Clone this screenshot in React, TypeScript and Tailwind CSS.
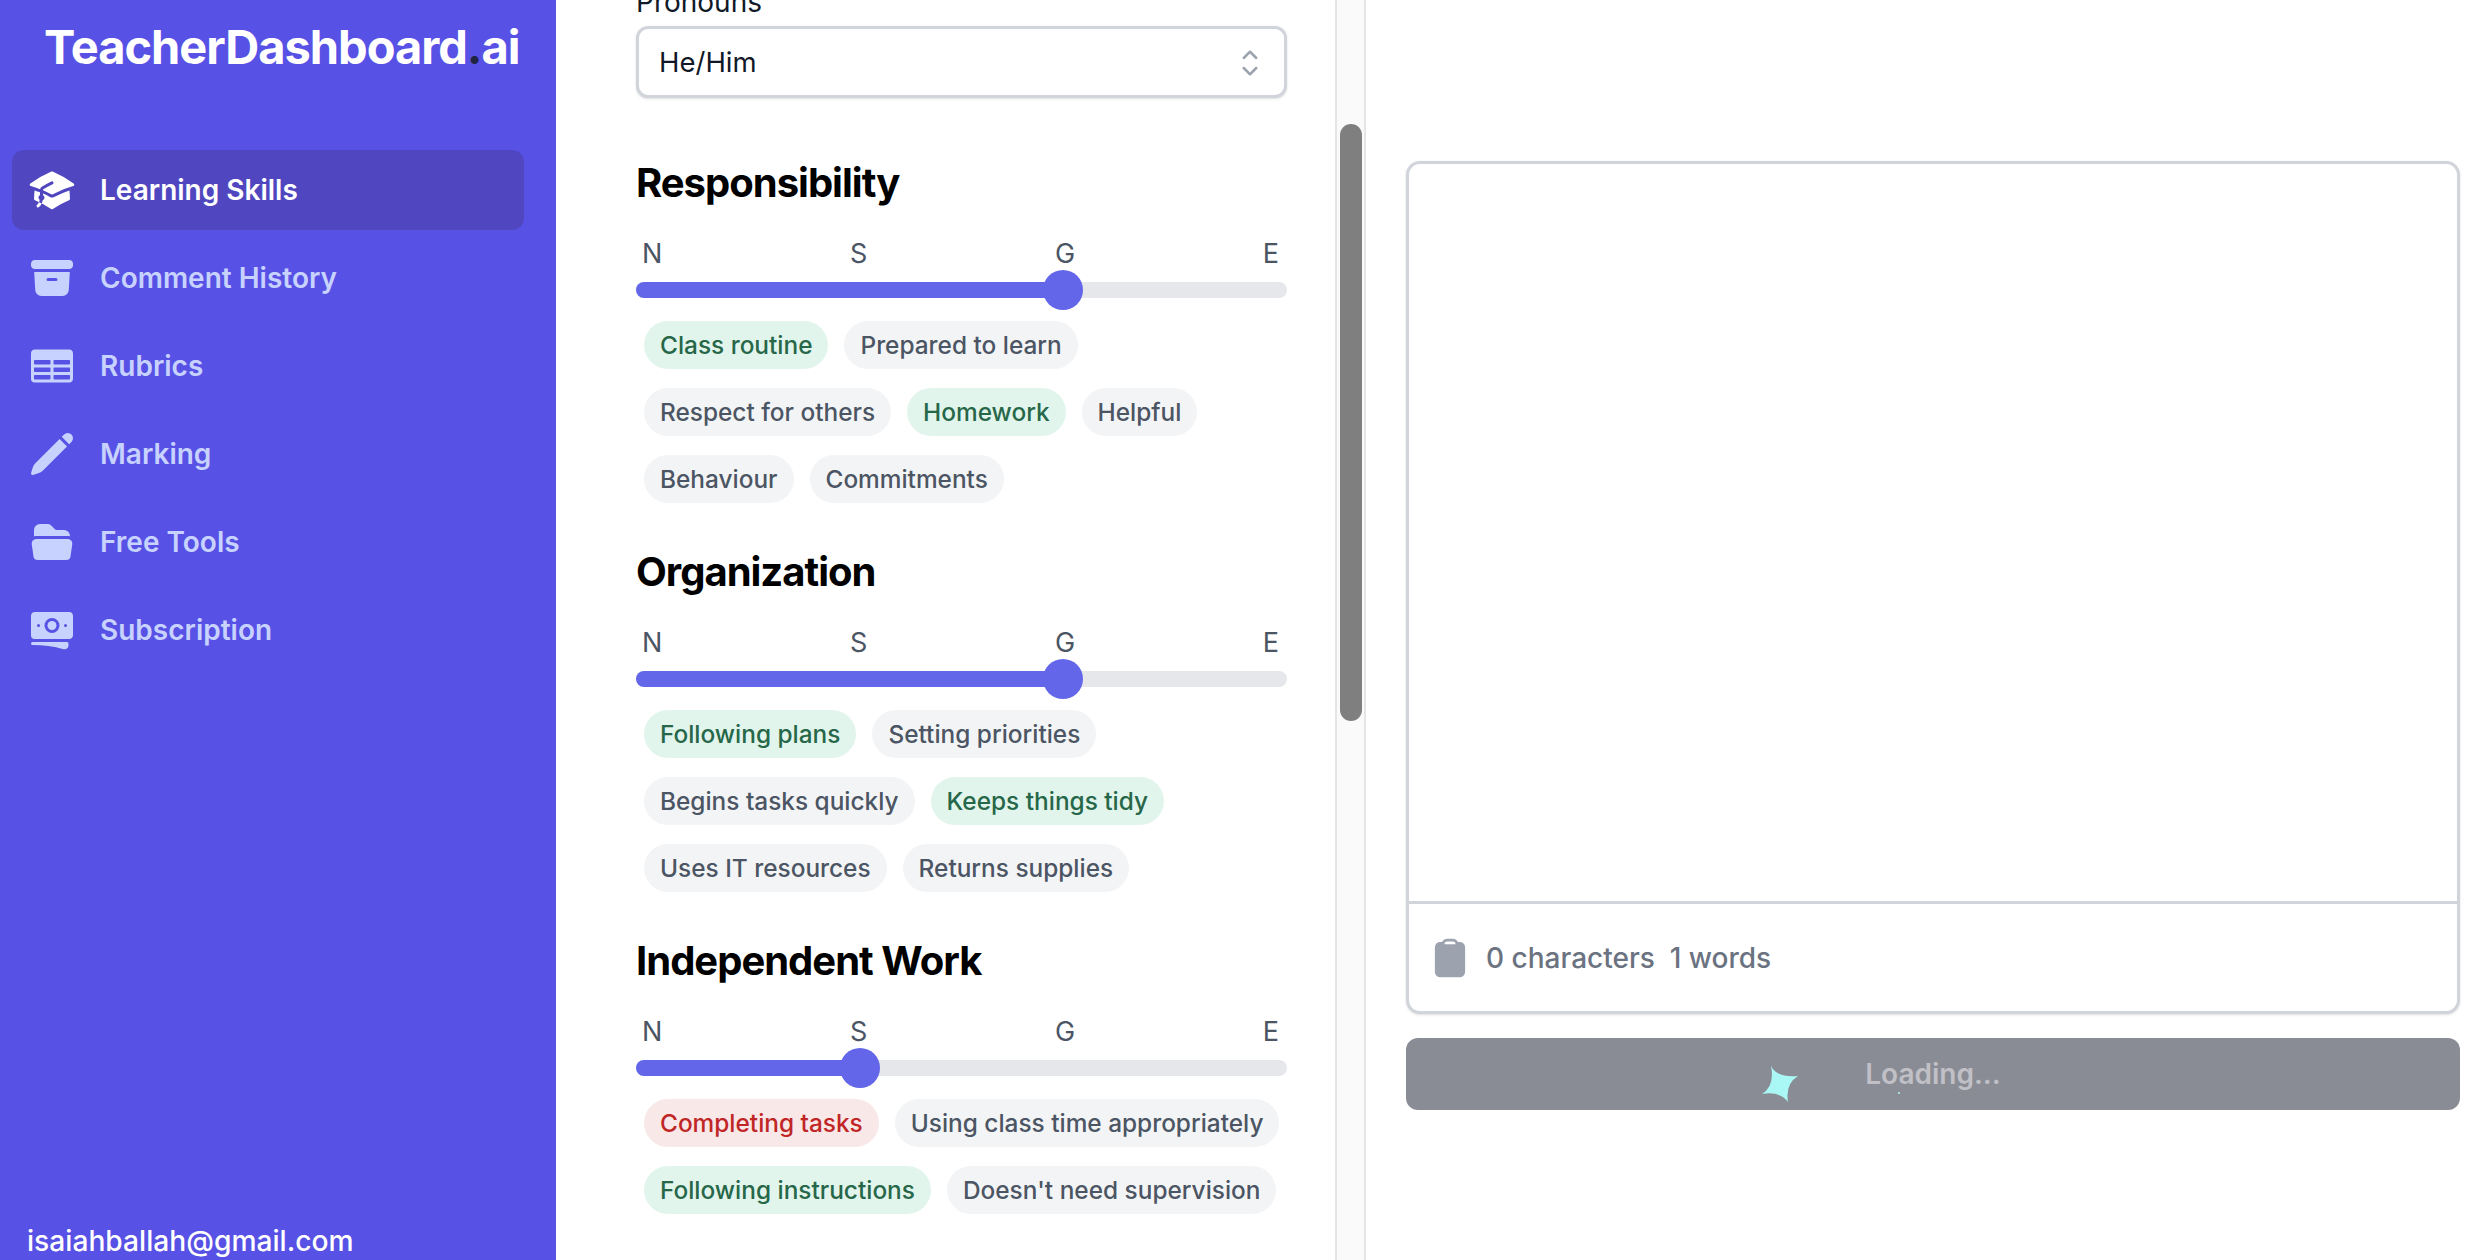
import {
  HiAcademicCap,
  HiArchiveBox,
  HiBanknotes,
  HiChevronUpDown,
  HiClipboard,
  HiFolderOpen,
  HiPencil,
  HiTableCells,
} from "react-icons/hi2";

type Tone = "plain" | "good" | "bad";

interface Skill {
  title: string;
  value: number;
  chips: [string, Tone][][];
}

const NAV = [
  { label: "Learning Skills", icon: HiAcademicCap, active: true },
  { label: "Comment History", icon: HiArchiveBox },
  { label: "Rubrics", icon: HiTableCells },
  { label: "Marking", icon: HiPencil },
  { label: "Free Tools", icon: HiFolderOpen },
  { label: "Subscription", icon: HiBanknotes },
];

const SKILLS: Skill[] = [
  {
    title: "Responsibility",
    value: 2,
    chips: [
      [["Class routine", "good"], ["Prepared to learn", "plain"]],
      [["Respect for others", "plain"], ["Homework", "good"], ["Helpful", "plain"]],
      [["Behaviour", "plain"], ["Commitments", "plain"]],
    ],
  },
  {
    title: "Organization",
    value: 2,
    chips: [
      [["Following plans", "good"], ["Setting priorities", "plain"]],
      [["Begins tasks quickly", "plain"], ["Keeps things tidy", "good"]],
      [["Uses IT resources", "plain"], ["Returns supplies", "plain"]],
    ],
  },
  {
    title: "Independent Work",
    value: 1,
    chips: [
      [["Completing tasks", "bad"], ["Using class time appropriately", "plain"]],
      [["Following instructions", "good"], ["Doesn't need supervision", "plain"]],
    ],
  },
];

const TONES: Record<Tone, string> = {
  plain: "bg-[#f3f4f6] text-[#4b5563]",
  good: "bg-[#e2f5ec] text-[#276749]",
  bad: "bg-[#f9e8e8] text-[#c02626]",
};

function Sidebar() {
  return (
    <aside className="flex h-full w-[556px] shrink-0 flex-col bg-[#5851e5]">
      <div className="pl-[44px] pt-[19px] text-[47px] leading-[56px] font-bold tracking-[-1px] text-white">
        TeacherDashboard<span className="text-[#1f2440]">.</span>ai
      </div>
      <nav className="mt-[75px] flex w-[524px] flex-col gap-[8px] pl-[12px]">
        {NAV.map(({ label, icon: Icon, active }) => (
          <div
            key={label}
            className={`flex h-[80px] items-center gap-[24px] rounded-[12px] pl-[16px] text-[28px] font-semibold ${
              active ? "bg-[#5046c0] text-white" : "text-[#c7d2fe]"
            }`}
          >
            <Icon className="size-[48px] shrink-0" />
            {label}
          </div>
        ))}
      </nav>
      <div className="mt-auto pb-[1px] pl-[27px] text-[28.2px] leading-[36px] font-medium text-white">
        isaiahballah@gmail.com
      </div>
    </aside>
  );
}

function Slider({ value }: { value: number }) {
  // thumb is 40px wide and stays inside the 651px rail
  const left = 20 + (611 * value) / 3;
  return (
    <div>
      <div className="flex justify-between pl-[6px] pr-[8px] text-[27px] leading-[32px] text-[#4b5563]">
        <span>N</span>
        <span>S</span>
        <span>G</span>
        <span>E</span>
      </div>
      <div className="relative mt-[12px] h-[16px] rounded-full bg-[#e5e7eb]">
        <div className="h-full rounded-full bg-[#6366e9]" style={{ width: left }} />
        <div
          className="absolute top-[-12px] size-[40px] -translate-x-1/2 rounded-full bg-[#6366e9]"
          style={{ left }}
        />
      </div>
    </div>
  );
}

function SkillBlock({ skill }: { skill: Skill }) {
  return (
    <section className="h-[389px]">
      <h2 className="text-[40px] leading-[48px] font-bold tracking-[-1px] text-black">{skill.title}</h2>
      <div className="mt-[31px]">
        <Slider value={skill.value} />
      </div>
      <div className="mt-[23px] flex flex-col gap-[19px] pl-[8px]">
        {skill.chips.map((row, i) => (
          <div key={i} className="flex gap-[16px]">
            {row.map(([text, tone]) => (
              <span
                key={text}
                className={`flex h-[48px] items-center rounded-full px-[16px] text-[24.4px] font-medium ${TONES[tone]}`}
              >
                {text}
              </span>
            ))}
          </div>
        ))}
      </div>
    </section>
  );
}

function FormColumn() {
  return (
    <div className="h-full w-[779px] shrink-0 overflow-hidden pl-[80px]">
      <div className="-mt-[14px] w-[651px]">
        <label className="block text-[28px] leading-[32px] text-[#111827]">Pronouns</label>
        <div className="mt-[8px] flex h-[72px] items-center justify-between rounded-[12px] border-[3px] border-[#d1d5db] bg-white pl-[20px] pr-[14px] pt-[1px] text-[27.5px] text-[#111827] shadow-sm">
          He/Him
          <HiChevronUpDown className="size-[40px] text-[#9ca3af]" />
        </div>
        <div className="mt-[61px]">
          {SKILLS.map((s) => (
            <SkillBlock key={s.title} skill={s} />
          ))}
        </div>
      </div>
    </div>
  );
}

function Scrollbar() {
  return (
    <div className="h-full w-[31px] shrink-0 border-x-2 border-[#e5e5e5] bg-[#fafafa] pl-[3px] pr-[2px] pt-[124px]">
      <div className="h-[597px] rounded-full bg-[#7f7f7f]" />
    </div>
  );
}

function Spark() {
  return (
    <svg viewBox="0 0 48 46" className="absolute left-[350px] top-[23px] h-[46px] w-[48px] text-[#aaf8f6]">
      <path
        fill="currentColor"
        d="M15 5Q21 17 42 15Q29 23 32 41Q24 30 6 33Q19 25 15 5Z"
      />
    </svg>
  );
}

function Output() {
  return (
    <div className="flex min-w-0 flex-1 flex-col pl-[40px] pr-[30px] pt-[161px]">
      <div className="flex h-[853px] flex-col rounded-[14px] border-[3px] border-[#d1d5db] bg-white shadow-sm">
        <div className="flex-1" />
        <div className="flex h-[110px] items-center gap-[14px] border-t-[3px] border-[#d1d5db] pl-[19px] text-[28px] font-medium text-[#6b7280]">
          <HiClipboard className="size-[44px] text-[#9ca3af]" />
          <span className="whitespace-pre">0 characters  1 words</span>
        </div>
      </div>
      <div className="relative mt-[24px] flex h-[72px] items-center justify-center rounded-[12px] bg-[#8a8c95] text-[28px] font-semibold text-[#c0c0c6]">
        Loading...
        <Spark />
        <span className="absolute left-[492px] top-[54px] size-[2px] rounded-full bg-[#aaf8f6]" />
      </div>
    </div>
  );
}

export default function App() {
  return (
    <div className="flex h-[1260px] w-full overflow-hidden bg-white font-['Inter',sans-serif]">
      <Sidebar />
      <FormColumn />
      <Scrollbar />
      <Output />
    </div>
  );
}
